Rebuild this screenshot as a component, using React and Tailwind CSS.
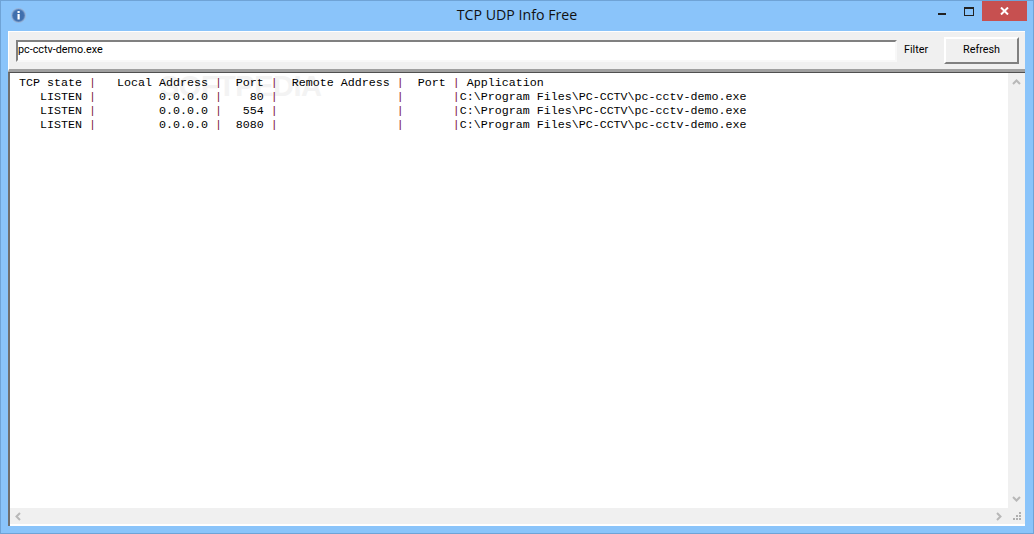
import React from "react";

const header = [
  ["TCP state ", "|"],
  ["   Local Address ", "|"],
  ["  Port ", "|"],
  ["  Remote Address ", "|"],
  ["  Port ", "|"],
  [" Application", ""],
];

const appPath = "C:\\Program Files\\PC-CCTV\\pc-cctv-demo.exe";

const rows = [
  ["   LISTEN ", "         0.0.0.0 ", "    80 ", appPath],
  ["   LISTEN ", "         0.0.0.0 ", "   554 ", appPath],
  ["   LISTEN ", "         0.0.0.0 ", "  8080 ", appPath],
];

const Sep = () => <span className="text-[#80203f]">|</span>;

const App = () => {
  return (
    <div className="w-[1034px] h-[534px] flex flex-col bg-[#8ac4fa] border border-[#6fa3d6] overflow-hidden">
      {/* Title bar */}
      <div className="h-[30px] shrink-0 grid grid-cols-[1fr_auto_1fr] items-center">
        <div className="pl-[10px] pb-[2px]">
          <svg width="15" height="15" viewBox="0 0 15 15">
            <circle cx="7.5" cy="7.5" r="7" fill="#5b85bd" stroke="#9db8da" />
            <circle cx="7.5" cy="7.5" r="5.5" fill="#3f6fae" />
            <rect x="6.5" y="3" width="2.2" height="2" fill="#fff" />
            <rect x="6.5" y="6" width="2.2" height="5.5" fill="#fff" />
          </svg>
        </div>
        <div className="text-[14.2px] text-[#111] font-['Open_Sans',sans-serif] pb-[3px]">
          TCP UDP Info Free
        </div>
        <div className="flex items-center justify-end mr-[6px] h-full">
          <div className="w-[8px] h-[2px] bg-[#222] -mt-[4px] mr-[18px]" />
          <div className="w-[10px] h-[9px] border border-[#222] border-t-[2px] mr-[8px] -mt-[10px]" />
          <div className="w-[45px] h-[20px] bg-[#c75050] flex items-center justify-center self-start">
            <svg width="9" height="8" viewBox="0 0 9 8">
              <path d="M1 0.5 L8 7.5 M8 0.5 L1 7.5" stroke="#fff" strokeWidth="2" fill="none" />
            </svg>
          </div>
        </div>
      </div>

      {/* Client area */}
      <div className="ml-[7px] mr-[8px] mb-[7px] flex-1 flex flex-col bg-white min-h-0">
        <div className="h-[41px] shrink-0 bg-[#f0f0f0] border-t border-l border-white border-b-[3px] border-b-[#a0a0a0] flex items-center pl-[7px] pr-[6px] font-['Roboto',sans-serif] text-[10.8px] text-black">
          <div className="flex-1 h-[22px] bg-white border-2 border-[#808080] border-r-[#f8f8f8] border-b-[#f8f8f8] flex items-center">
            pc-cctv-demo.exe
          </div>
          <div className="w-[47px] pl-[7px]">Filter</div>
          <div className="w-[75px] h-[27px] bg-[#f0f0f0] border-2 border-white border-r-[#808080] border-b-[#808080] flex items-center justify-center">
            Refresh
          </div>
        </div>

        <div className="flex-1 flex flex-col min-h-0 border-l-2 border-t border-l-[#707070] border-t-[#505050]">
          <div className="flex-1 flex min-h-0">
            <div className="flex-1 relative overflow-hidden">
              {/* Watermark */}
              <div className="absolute left-[150px] -top-[8px] text-[29px] font-bold text-[#f3f3f3] tracking-[-0.5px] font-['Liberation_Sans',sans-serif] select-none">
                SOFTPEDIA
              </div>
              <div className="relative pt-[3px] pl-[9px] font-['Liberation_Mono',monospace] text-[11.67px] leading-[14px] text-black whitespace-pre">
                <div>
                  {header.map(([text, sep], i) => (
                    <span key={i}>
                      {text}
                      {sep && <Sep />}
                    </span>
                  ))}
                </div>
                {rows.map(([state, local, port, path], i) => (
                  <div key={i}>
                    {state}
                    <Sep />
                    {local}
                    <Sep />
                    {port}
                    <Sep />
                    {"                 "}
                    <Sep />
                    {"       "}
                    <Sep />
                    {path}
                  </div>
                ))}
              </div>
            </div>
            <div className="w-[17px] bg-[#f0f0f0] flex flex-col items-center justify-between py-[6px] text-[#b8b8b8]">
              <svg width="9" height="6" viewBox="0 0 9 6">
                <path d="M1 5 L4.5 1.5 L8 5" fill="none" stroke="currentColor" strokeWidth="2" />
              </svg>
              <svg width="9" height="6" viewBox="0 0 9 6">
                <path d="M1 1 L4.5 4.5 L8 1" fill="none" stroke="currentColor" strokeWidth="2" />
              </svg>
            </div>
          </div>
          <div className="h-[18px] shrink-0 bg-[#f0f0f0] flex items-center justify-between pl-[5px] text-[#b8b8b8] border-b-2 border-white">
            <svg width="6" height="9" viewBox="0 0 6 9">
              <path d="M5 1 L1.5 4.5 L5 8" fill="none" stroke="currentColor" strokeWidth="2" />
            </svg>
            <div className="flex items-center">
              <svg width="6" height="9" viewBox="0 0 6 9" className="mr-[6px]">
                <path d="M1 1 L4.5 4.5 L1 8" fill="none" stroke="currentColor" strokeWidth="2" />
              </svg>
              {/* Size grip */}
              <div className="w-[17px] flex justify-center">
                <svg width="8" height="8" viewBox="0 0 8 8" fill="#b0b0b0">
                  <rect x="6" y="0" width="2" height="2" />
                  <rect x="3" y="3" width="2" height="2" />
                  <rect x="6" y="3" width="2" height="2" />
                  <rect x="0" y="6" width="2" height="2" />
                  <rect x="3" y="6" width="2" height="2" />
                  <rect x="6" y="6" width="2" height="2" />
                </svg>
              </div>
            </div>
          </div>
        </div>
      </div>
    </div>
  );
};

export default App;
